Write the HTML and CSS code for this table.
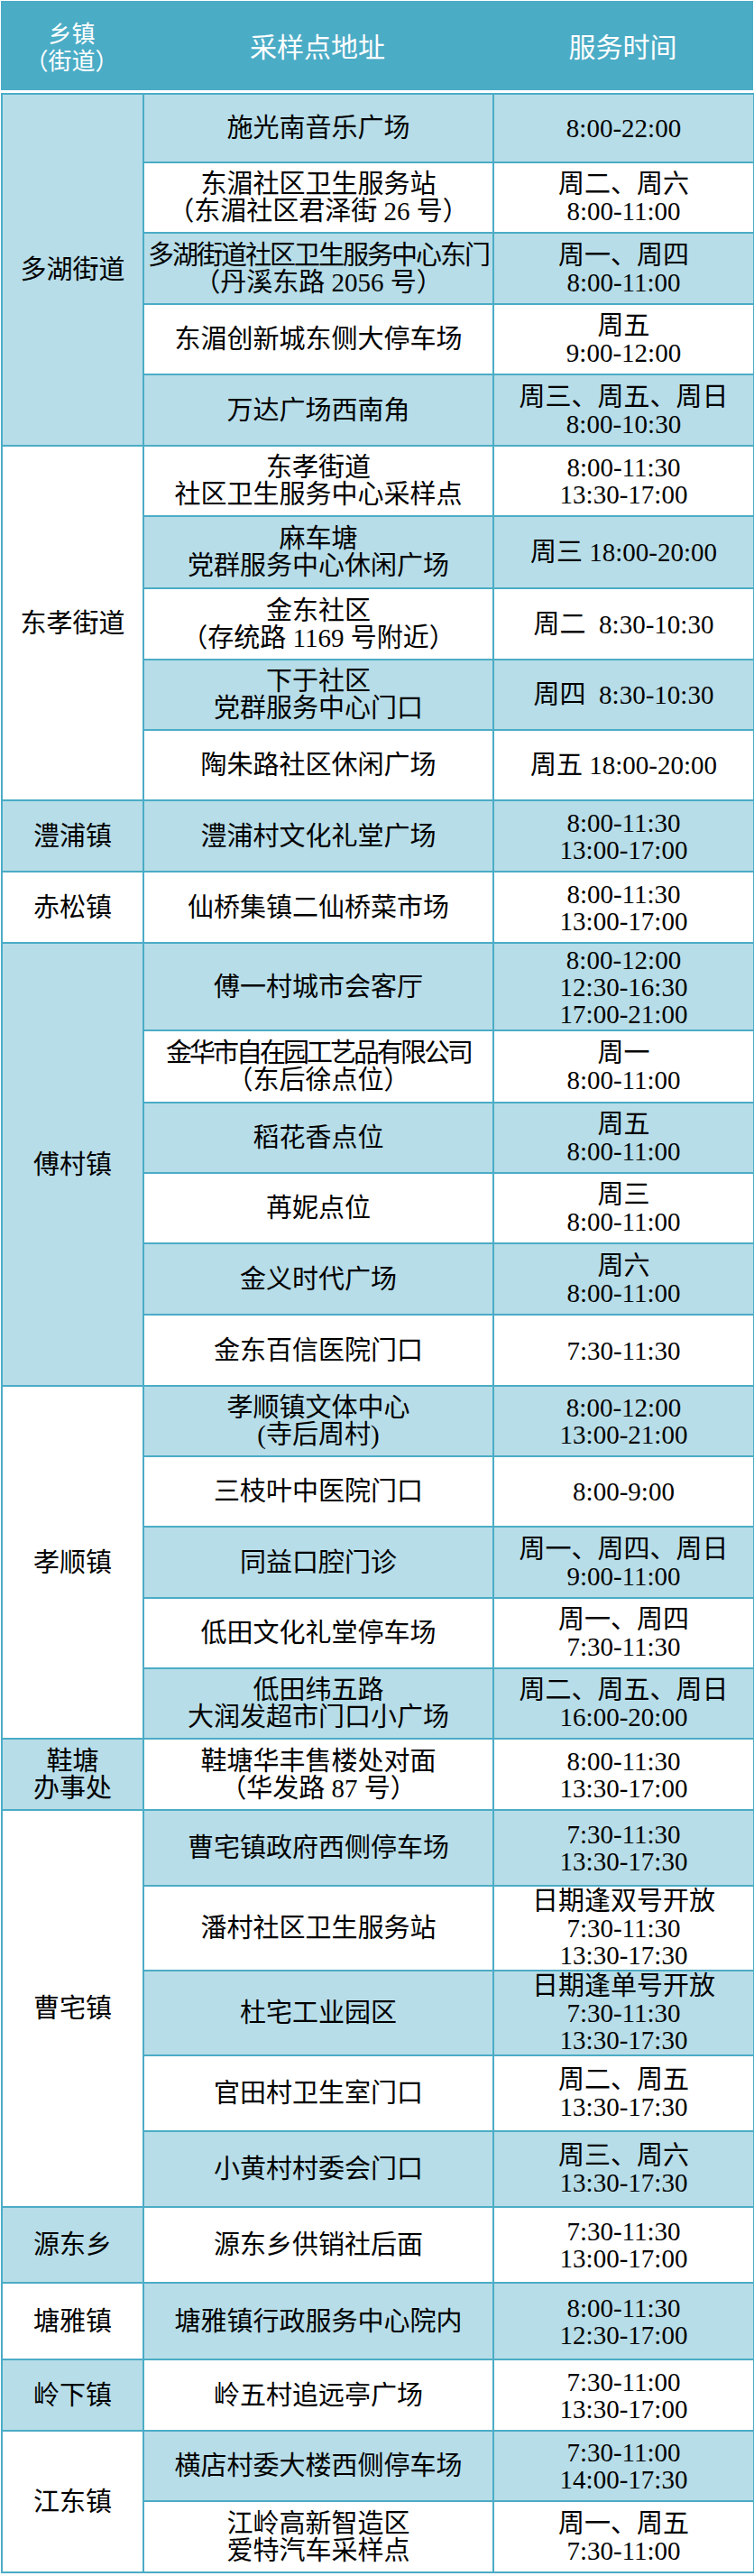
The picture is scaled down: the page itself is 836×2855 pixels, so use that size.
FILE: index.html
```html
<!DOCTYPE html>
<html lang="zh-CN">
<head>
<meta charset="utf-8">
<title>核酸采样点</title>
<link rel="stylesheet" href="styles.css">
</head>
<body>
<div class="head">
  <div class="hc hc1">乡镇<br>（街道）</div>
  <div class="hc">采样点地址</div>
  <div class="hc">服务时间</div>
</div>
<table class="sheet">
  <colgroup><col class="c1"><col class="c2"><col class="c3"></colgroup>
  <tbody>
    <tr class="h76"><td class="b" rowspan="5">多湖街道</td><td class="b">施光南音乐广场</td><td class="b">8:00-22:00</td></tr>
    <tr class="h78"><td>东湄社区卫生服务站<br>（东湄社区君泽街 26 号）</td><td>周二、周六<br>8:00-11:00</td></tr>
    <tr class="h79"><td class="b"><span class="tight">多湖街道社区卫生服务中心东门</span><br>（丹溪东路 2056 号）</td><td class="b">周一、周四<br>8:00-11:00</td></tr>
    <tr class="h78"><td>东湄创新城东侧大停车场</td><td>周五<br>9:00-12:00</td></tr>
    <tr class="h79"><td class="b">万达广场西南角</td><td class="b">周三、周五、周日<br>8:00-10:30</td></tr>

    <tr class="h78"><td rowspan="5">东孝街道</td><td>东孝街道<br>社区卫生服务中心采样点</td><td>8:00-11:30<br>13:30-17:00</td></tr>
    <tr class="h80"><td class="b">麻车塘<br>党群服务中心休闲广场</td><td class="b">周三 18:00-20:00</td></tr>
    <tr class="h79"><td>金东社区<br>（存统路 1169 号附近）</td><td>周二&nbsp;&nbsp;8:30-10:30</td></tr>
    <tr class="h78"><td class="b">下于社区<br>党群服务中心门口</td><td class="b">周四&nbsp;&nbsp;8:30-10:30</td></tr>
    <tr class="h78"><td>陶朱路社区休闲广场</td><td>周五 18:00-20:00</td></tr>

    <tr class="h79"><td class="b">澧浦镇</td><td class="b">澧浦村文化礼堂广场</td><td class="b">8:00-11:30<br>13:00-17:00</td></tr>
    <tr class="h79"><td>赤松镇</td><td>仙桥集镇二仙桥菜市场</td><td>8:00-11:30<br>13:00-17:00</td></tr>

    <tr class="h97"><td class="b" rowspan="6">傅村镇</td><td class="b">傅一村城市会客厅</td><td class="b">8:00-12:00<br>12:30-16:30<br>17:00-21:00</td></tr>
    <tr class="h80"><td><span class="tighter">金华市自在园工艺品有限公司</span><br>（东后徐点位）</td><td>周一<br>8:00-11:00</td></tr>
    <tr class="h78"><td class="b">稻花香点位</td><td class="b">周五<br>8:00-11:00</td></tr>
    <tr class="h78"><td>苒妮点位</td><td>周三<br>8:00-11:00</td></tr>
    <tr class="h79"><td class="b">金义时代广场</td><td class="b">周六<br>8:00-11:00</td></tr>
    <tr class="h79"><td>金东百信医院门口</td><td>7:30-11:30</td></tr>

    <tr class="h78"><td rowspan="5">孝顺镇</td><td class="b">孝顺镇文体中心<br>(寺后周村)</td><td class="b">8:00-12:00<br>13:00-21:00</td></tr>
    <tr class="h78"><td>三枝叶中医院门口</td><td>8:00-9:00</td></tr>
    <tr class="h79"><td class="b">同益口腔门诊</td><td class="b">周一、周四、周日<br>9:00-11:00</td></tr>
    <tr class="h78"><td>低田文化礼堂停车场</td><td>周一、周四<br>7:30-11:30</td></tr>
    <tr class="h78"><td class="b">低田纬五路<br>大润发超市门口小广场</td><td class="b">周二、周五、周日<br>16:00-20:00</td></tr>

    <tr class="h79"><td class="b">鞋塘<br>办事处</td><td>鞋塘华丰售楼处对面<br>（华发路 87 号）</td><td>8:00-11:30<br>13:30-17:00</td></tr>

    <tr class="h84"><td rowspan="5">曹宅镇</td><td class="b">曹宅镇政府西侧停车场</td><td class="b">7:30-11:30<br>13:30-17:30</td></tr>
    <tr class="h94"><td>潘村社区卫生服务站</td><td>日期逢双号开放<br>7:30-11:30<br>13:30-17:30</td></tr>
    <tr class="h94"><td class="b">杜宅工业园区</td><td class="b">日期逢单号开放<br>7:30-11:30<br>13:30-17:30</td></tr>
    <tr class="h84"><td>官田村卫生室门口</td><td>周二、周五<br>13:30-17:30</td></tr>
    <tr class="h84"><td class="b">小黄村村委会门口</td><td class="b">周三、周六<br>13:30-17:30</td></tr>

    <tr class="h84"><td class="b">源东乡</td><td>源东乡供销社后面</td><td>7:30-11:30<br>13:00-17:00</td></tr>
    <tr class="h85"><td>塘雅镇</td><td class="b">塘雅镇行政服务中心院内</td><td class="b">8:00-11:30<br>12:30-17:00</td></tr>
    <tr class="h79"><td class="b">岭下镇</td><td>岭五村追远亭广场</td><td>7:30-11:00<br>13:30-17:00</td></tr>

    <tr class="h78"><td rowspan="2">江东镇</td><td class="b">横店村委大楼西侧停车场</td><td class="b">7:30-11:00<br>14:00-17:30</td></tr>
    <tr class="h79"><td>江岭高新智造区<br>爱特汽车采样点</td><td>周一、周五<br>7:30-11:00</td></tr>
  </tbody>
</table>
</body>
</html>
```
FILE: styles.css
```css
html, body {
  margin: 0;
  padding: 0;
  background: #ffffff;
}

body {
  width: 836px;
}

.head {
  margin: 1px 1px 0 1px;
  height: 99px;
  background: #4BACC6;
  display: grid;
  grid-template-columns: 157px 388px 1fr;
  align-items: center;
  color: #ffffff;
  font-family: "Noto Sans CJK SC", "Noto Sans", sans-serif;
  font-size: 30px;
  line-height: 31px;
  text-align: center;
}

.hc1 {
  font-size: 26px;
  line-height: 30px;
}

.sheet {
  margin: 3px 0 0 1px;
  width: 834px;
  border-collapse: collapse;
  table-layout: fixed;
  font-family: "Liberation Serif", "Noto Sans CJK SC", serif;
  font-size: 29px;
  line-height: 30px;
  color: #000000;
}

.c1 { width: 157px; }
.c2 { width: 388px; }
.c3 { width: 289px; }

.sheet td {
  border: 2px solid #4BACC6;
  padding: 0;
  text-align: center;
  vertical-align: middle;
  white-space: nowrap;
  background: #ffffff;
}

.sheet td.b {
  background: #B7DDE8;
}

.tight { letter-spacing: -2px; }
.tighter { letter-spacing: -3px; }

.h76 { height: 76px; }
.h78 { height: 78px; }
.h79 { height: 79px; }
.h80 { height: 80px; }
.h84 { height: 84px; }
.h85 { height: 85px; }
.h94 { height: 94px; }
.h97 { height: 97px; }
```
